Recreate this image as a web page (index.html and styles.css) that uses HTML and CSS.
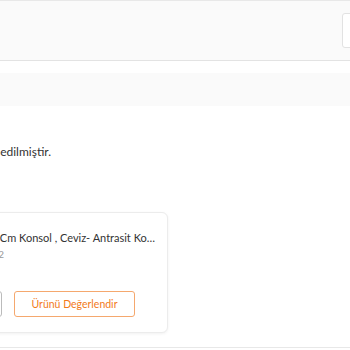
FILE: index.html
```html
<!DOCTYPE html>
<html lang="tr">
<head>
<meta charset="utf-8">
<link rel="stylesheet" href="styles.css">
</head>
<body>
<div class="page">
  <header class="topbar">
    <div class="search-box"></div>
  </header>
  <div class="band"></div>
  <div class="notice"><span>Siparişiniz teslim edilmiştir.</span></div>
  <div class="card">
    <div class="row title"><span>Dekorister 90 Cm Konsol , Ceviz- Antrasit Ko…</span></div>
    <div class="row meta"><span>Sipariş No: 2</span></div>
    <div class="actions">
      <button class="btn">Tekrar Satın Al</button>
      <button class="btn btn-orange">Ürünü Değerlendir</button>
    </div>
  </div>
  <div class="next"></div>
</div>
</body>
</html>
```
FILE: styles.css
```css
html, body {
  margin: 0;
  padding: 0;
  background: #fff;
  overflow: hidden;
}
body {
  font-family: "Source Sans Pro", "Lato", "Noto Sans", sans-serif;
  color: #333;
  width: 350px;
  height: 350px;
}
.page {
  display: flex;
  flex-direction: column;
}
.topbar {
  height: 59px;
  border-top: 1px solid #e8e8e8;
  border-bottom: 1px solid #e3e3e3;
  background: #fafafa;
  display: flex;
  justify-content: flex-end;
  align-items: flex-start;
}
.search-box {
  margin-top: 12px;
  margin-right: -30px;
  width: 36px;
  height: 33px;
  border: 1px solid #e2e2e2;
  border-radius: 3px;
  background: #fff;
}
.band {
  margin-top: 12px;
  height: 33px;
  background: #fafafa;
}
.notice {
  margin-top: 38px;
  width: 51px;
  display: flex;
  justify-content: flex-end;
  font-size: 12px;
  line-height: 16px;
  white-space: nowrap;
}
.card {
  margin: 52px 0 0 -200px;
  width: 368px;
  height: 121px;
  box-sizing: border-box;
  padding: 0 12px 0 0;
  border: 1px solid #ececec;
  border-radius: 6px;
  box-shadow: 0 1px 3px rgba(0,0,0,0.06);
  background: #fff;
  display: flex;
  flex-direction: column;
}
.row {
  display: flex;
  justify-content: flex-end;
  white-space: nowrap;
}
.title {
  margin-top: 17px;
  font-size: 11px;
  line-height: 16px;
}
.meta {
  margin-right: 151px;
  font-size: 10px;
  line-height: 14px;
  color: #999;
  margin-top: 1px;
}
.actions {
  margin-top: 30px;
  display: flex;
  justify-content: flex-end;
  gap: 12px;
  padding-right: 20px;
}
.btn {
  height: 26px;
  width: 121px;
  border: 1px solid #bbb;
  border-radius: 3px;
  background: #fff;
  font-family: inherit;
  font-size: 10.5px;
  color: #333;
  padding: 0;
}
.btn-orange {
  border-color: #f5a86e;
  color: #f27a1a;
}
.next {
  margin-top: 14px;
  border-top: 1px solid #e8e8e8;
  height: 10px;
}
```
